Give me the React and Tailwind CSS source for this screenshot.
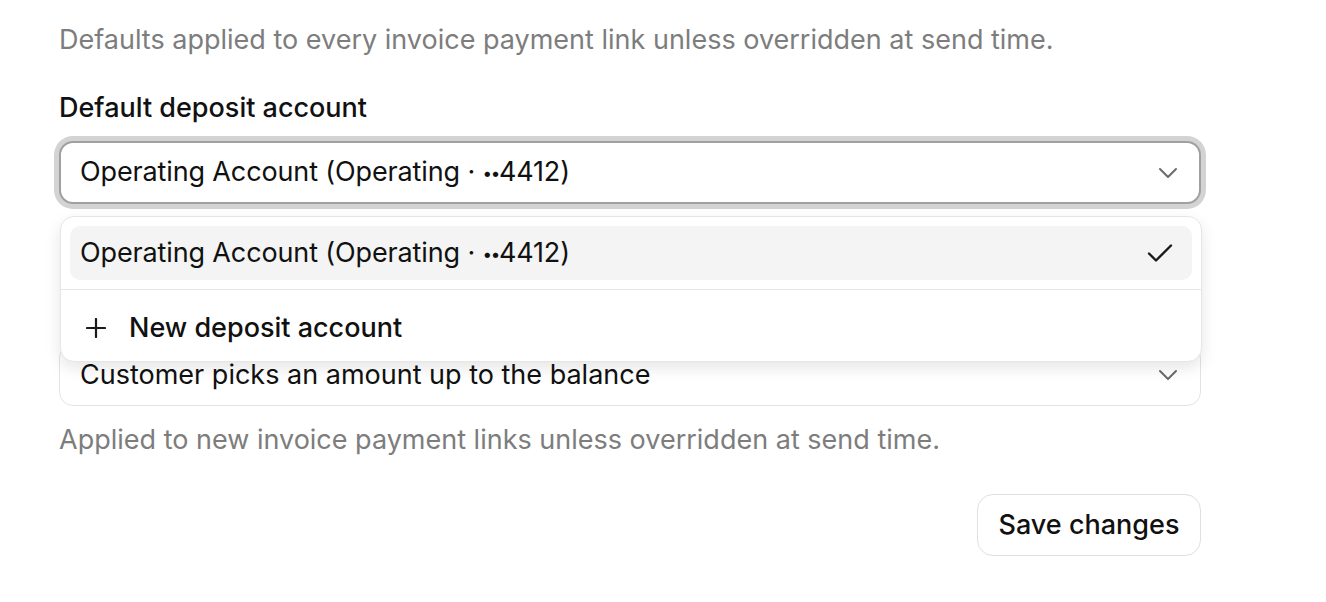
import React from "react";

const Chevron = () => (
  <svg width="20" height="12" viewBox="0 0 20 12" fill="none" className="shrink-0">
    <path d="M2 2l8 8 8-8" stroke="#6b6b6b" strokeWidth="2" strokeLinecap="round" strokeLinejoin="round" />
  </svg>
);

const Check = () => (
  <svg width="26" height="20" viewBox="0 0 26 20" fill="none" className="shrink-0">
    <path d="M2 10.5l7 7L24 2.5" stroke="#1a1a1a" strokeWidth="2.4" strokeLinecap="round" strokeLinejoin="round" />
  </svg>
);

const Plus = () => (
  <svg width="20" height="20" viewBox="0 0 20 20" fill="none" className="shrink-0">
    <path d="M10 1v18M1 10h18" stroke="#1a1a1a" strokeWidth="2.2" strokeLinecap="round" />
  </svg>
);

const AccountName = () => (
  <span className="tracking-[-0.005em]">
    Operating Account (Operating ·{" "}
    <span className="align-[2px] text-[17px] tracking-[-0.08em]">••</span>4412)
  </span>
);

export default function App() {
  return (
    <div
      className="min-h-[602px] w-full bg-white text-[#111]"
      style={{ fontFamily: "Inter, 'Liberation Sans', sans-serif" }}
    >
      <div className="flex w-[1201px] flex-col pl-[59px] pt-[22px]">
        <p className="text-[27px] leading-[36px] text-[#7d7d7d]">
          Defaults applied to every invoice payment link unless overridden at send time.
        </p>

        <div className="relative mt-[32px] flex flex-col">
          <label className="text-[27px] font-medium leading-[36px]">Default deposit account</label>
          <button className="mt-[15px] flex h-[63px] w-full items-center justify-between rounded-[14px] border-2 border-[#a0a0a0] bg-white pl-[19px] pr-[21px] text-left text-[27px] ring-[5px] ring-[#d3d3d3]">
            <AccountName />
            <Chevron />
          </button>
          <p className="mt-[17px] text-[27px] leading-[36px] text-[#7d7d7d]">
            Payouts from invoice payments land in this account.
          </p>

          <div className="absolute left-[1px] top-[126px] z-10 flex w-[1142px] flex-col rounded-[14px] border border-[#e6e6e6] bg-white shadow-[0_6px_16px_rgba(0,0,0,0.10)]">
            <div className="p-[9px] pb-[9px]">
              <div className="flex h-[54px] items-center justify-between rounded-[10px] bg-[#f4f4f4] pl-[10px] pr-[19px] text-[27px]">
                <AccountName />
                <Check />
              </div>
            </div>
            <div className="h-px bg-[#e6e6e6]" />
            <div className="p-[9px] pb-[6px] pt-[11px]">
              <div className="flex h-[54px] items-center gap-[23px] pl-[16px] text-[27px] font-medium">
                <Plus />
                <span>New deposit account</span>
              </div>
            </div>
          </div>
        </div>

        <div className="mt-[36px] flex flex-col">
          <label className="text-[27px] font-medium leading-[36px]">Payment amount</label>
          <button className="mt-[15px] flex h-[62px] w-full items-center justify-between rounded-[14px] border border-[#e3e3e3] bg-white pl-[20px] pr-[22px] text-left text-[27px]">
            <span>Customer picks an amount up to the balance</span>
            <Chevron />
          </button>
          <p className="mt-[16px] text-[27px] leading-[36px] text-[#7d7d7d]">
            Applied to new invoice payment links unless overridden at send time.
          </p>
        </div>

        <div className="mt-[36px] flex justify-end">
          <button className="flex h-[62px] w-[224px] items-center justify-center rounded-[16px] border-[1.5px] border-[#e0e0e0] bg-white text-[27px] font-medium">
            Save changes
          </button>
        </div>
      </div>
    </div>
  );
}
